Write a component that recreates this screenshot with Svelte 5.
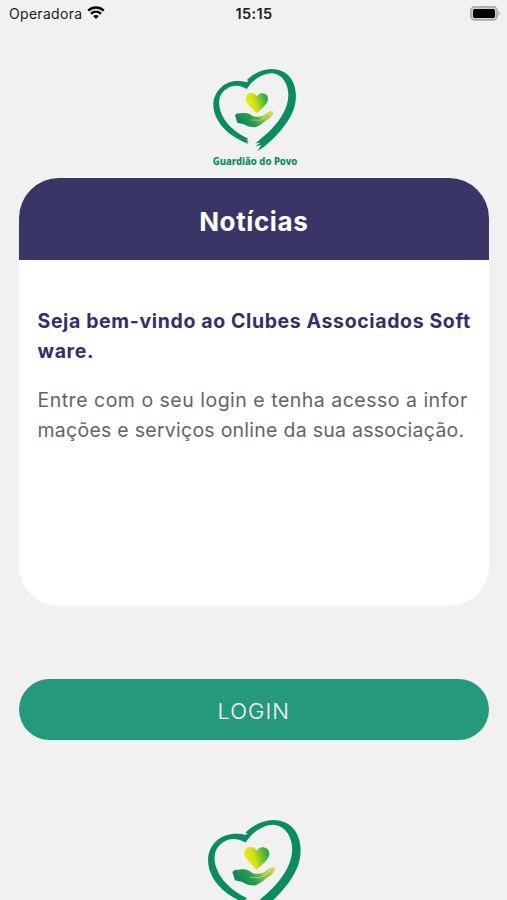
<script lang="ts">
	const carrier = 'Operadora';
	const time = '15:15';

	const news = {
		title: ['Seja bem-vindo ao Clubes Associados Soft', 'ware.'],
		body: ['Entre com o seu login e tenha acesso a infor', 'mações e serviços online da sua associação.']
	};
</script>

{#snippet logo(id: string, name: string)}
	<svg viewBox="-3 0 330 345" role="img" aria-label="Guardião do Povo">
		<defs>
			<linearGradient id="{id}-heart" x1="0" y1="0.6" x2="1" y2="0.3">
				<stop offset="0" stop-color="#f4ed0b" />
				<stop offset="0.4" stop-color="#d2e010" />
				<stop offset="1" stop-color="#12a845" />
			</linearGradient>
			<linearGradient id="{id}-hand" x1="0" y1="0.3" x2="1" y2="0">
				<stop offset="0" stop-color="#078a58" />
				<stop offset="0.35" stop-color="#2a9e4c" />
				<stop offset="0.7" stop-color="#9ccc3a" />
				<stop offset="1" stop-color="#e6e05a" />
			</linearGradient>
		</defs>
		<path
			fill="#078d62"
			d="M141 67 C116 60 84 62 62 83 C38 106 37 135 43 157 C53 194 88 230 145 252 L141 246 L147 244 L139 239 L145 236 C105 218 72 187 61 152 C51 119 62 96 84 84 C101 75 119 75 140 87 L153 70 C172 51 198 38 218 40 C247 43 264 72 265 101 C267 145 235 190 199 222 L167 250 L181 248 L166 259 L184 255 L172 273 L190 262 C230 230 264 190 279 153 C291 124 291 89 277 62 C262 37 240 27 214 27 C185 28 156 43 140 61 L146 62 Z"
		/>
		<path
			fill="url(#{id}-heart)"
			d="M171 160 C157 146 137 131 137 116 C137 98 160 93 170 109 C179 93 204 99 204 117 C204 132 183 147 171 160 Z"
		/>
		<path
			fill="url(#{id}-hand)"
			d="M105 166 C109 160 116 160 124 160 C138 157 148 160 160 169 C168 172 178 169 185 169 C194 165 200 158 208 155 C213 152 221 152 220 158 C217 169 208 176 199 181 C189 188 180 198 165 202 C152 202 142 200 132 193 L112 188 Z"
		/>
		<path class="crease" d="M152 180 L177 181 Q189 179 198 170 M184 174 L208 162" />
		{#if name}
			<text x="165" y="314" text-anchor="middle" textLength="254" lengthAdjust="spacingAndGlyphs">{name}</text>
		{/if}
	</svg>
{/snippet}

<div class="screen">
	<header class="status">
		<div class="status__carrier">
			<span>{carrier}</span>
			<svg class="wifi" viewBox="0 0 18 14" aria-hidden="true">
				<path d="M1.2 4.7 C5.7 .5 12.3 .5 16.8 4.7" />
				<path d="M4 7.8 C7 5.1 11 5.1 14 7.8" />
				<path class="wifi__dot" d="M6.1 10.1 Q9 7.7 11.9 10.1 L9 13 Z" />
			</svg>
		</div>
		<span class="status__time">{time}</span>
		<svg class="battery" viewBox="0 0 31 15" aria-hidden="true">
			<rect x="0.9" y="0.9" width="26.2" height="13" rx="3.8" />
			<path d="M28.5 5 Q31.5 7.4 28.5 9.8 Z" />
			<rect class="battery__level" x="3" y="3" width="22" height="9" rx="1.8" />
		</svg>
	</header>

	<div class="logo">{@render logo('top', 'Guardião do Povo')}</div>

	<section class="card">
		<h1 class="card__header">Notícias</h1>
		<div class="card__body">
			<h2 class="card__title">
				{#each news.title as line}<span class="line">{line}</span>{/each}
			</h2>
			<p class="card__text">
				{#each news.body as line}<span class="line">{line}</span>{/each}
			</p>
		</div>
	</section>

	<button class="login" type="button">LOGIN</button>

	<div class="logo logo--footer">{@render logo('footer', '')}</div>
</div>

<style>
	:global(body) { background: #f1f1f1; overflow: hidden; }

	.screen { display: flex; flex-direction: column; height: 900px; padding: 0 18.5px 0 19px; box-sizing: border-box; overflow: hidden; background: #f1f1f1; font-family: Inter, sans-serif; }
	.screen > * { flex-shrink: 0; }

	.status { display: grid; grid-template-columns: 1fr auto 1fr; align-items: center; height: 28px; margin: 0 -12.5px 0 -10px; color: #1c1c1c; font-size: 14px; }
	.status__carrier { display: flex; align-items: center; gap: 5px; margin-top: -1px; letter-spacing: 0.3px; }
	.status__time { margin: -1px 2px 0 0; font-weight: 600; font-size: 14.5px; letter-spacing: 0.4px; }
	.wifi { width: 18px; height: 14px; margin-top: -1px; fill: none; stroke: #080808; stroke-width: 2.5; }
	.wifi .wifi__dot { fill: #080808; stroke: none; }
	.battery { justify-self: end; width: 31px; height: 15px; margin-top: -2px; fill: #b4b4b4; }
	.battery rect:first-child { fill: #d2d2d2; stroke: #aaa; stroke-width: 1.6; }
	.battery .battery__level { fill: #000; }

	.logo { width: 110px; height: 115px; margin: 32px auto 3px; }
	.logo svg { display: block; width: 100%; height: 100%; }
	.logo text { fill: #078d62; font-family: "Noto Sans", sans-serif; font-size: 30px; font-weight: 800; }
	.logo .crease { fill: none; stroke: #f1f1f1; stroke-width: 1.5; stroke-opacity: 0.8; }
	.logo--footer { width: 123.3px; height: 128.9px; margin: 70px auto 0; }

	.card { display: flex; flex-direction: column; height: 427.5px; border-radius: 40px; overflow: hidden; background: #fff; }
	.card__header { display: flex; align-items: center; justify-content: center; height: 81.5px; margin: 0; padding-top: 6px; box-sizing: border-box; background: #393567; color: #fff; font-size: 26px; font-weight: 700; letter-spacing: 0.6px; }
	.card__body { padding: 46px 18.5px 0; }
	.card__title { margin: 0 0 18px; color: #352e6b; font-size: 19.5px; font-weight: 700; line-height: 30.5px; letter-spacing: 0.62px; }
	.card__text { margin: 0; color: #646464; font-size: 19.5px; font-weight: 400; line-height: 30.5px; letter-spacing: 0.5px; }
	.line { display: block; white-space: nowrap; }
	.card__text .line:last-child { letter-spacing: 0.26px; }

	.login { width: 100%; height: 61px; margin-top: 73.5px; padding: 3px 0 0; border: 0; border-radius: 31px; background: #24997c; color: #fff; font-family: inherit; font-size: 22px; font-weight: 300; letter-spacing: 1px; }
</style>
